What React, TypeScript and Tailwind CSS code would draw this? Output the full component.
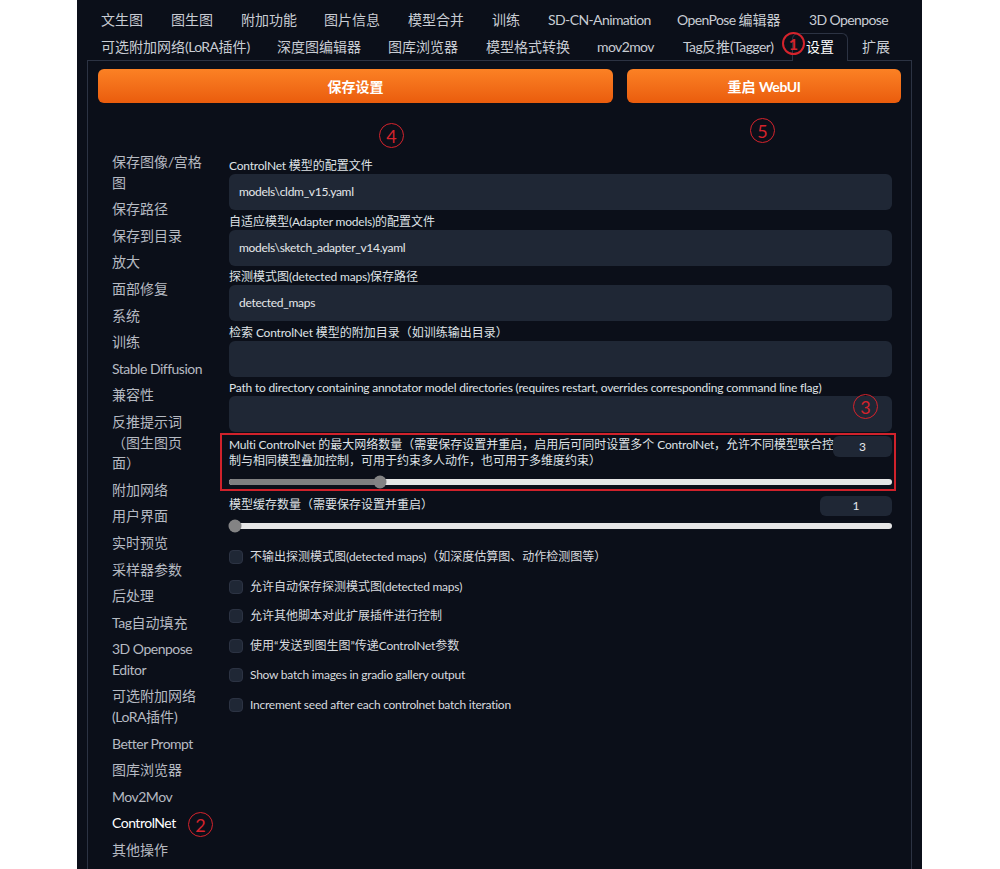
import React from 'react';

// widths taken from the tab strip, so the tabs land where the annotation expects them
const tabRow1 = [
  { t: '文生图', w: 'w-[70px]' },
  { t: '图生图', w: 'w-[70px]' },
  { t: '附加功能', w: 'w-[83px]' },
  { t: '图片信息', w: 'w-[84px]' },
  { t: '模型合并', w: 'w-[84px]' },
  { t: '训练', w: 'w-[56px]' },
  { t: 'SD-CN-Animation', w: 'w-[129px]' },
  { t: 'OpenPose 编辑器', w: 'w-[132px]' },
  { t: '3D Openpose', w: 'w-[104px]' },
];
const tabRow2 = [
  { t: '可选附加网络(LoRA插件)', w: 'w-[176px]' },
  { t: '深度图编辑器', w: 'w-[111px]' },
  { t: '图库浏览器', w: 'w-[98px]' },
  { t: '模型格式转换', w: 'w-[111px]' },
  { t: 'mov2mov', w: 'w-[86px]' },
  { t: 'Tag反推(Tagger)', w: 'w-[123px]' },
  { t: '设置', w: 'w-[56px]' },
  { t: '扩展', w: 'w-[56px]' },
];

const sideItems: string[][] = [
  ['保存图像/宫格', '图'], ['保存路径'], ['保存到目录'], ['放大'], ['面部修复'], ['系统'], ['训练'], ['Stable Diffusion'], ['兼容性'],
  ['反推提示词', '（图生图页', '面）'], ['附加网络'], ['用户界面'], ['实时预览'], ['采样器参数'], ['后处理'], ['Tag自动填充'],
  ['3D Openpose', 'Editor'], ['可选附加网络', '(LoRA插件)'], ['Better Prompt'], ['图库浏览器'], ['Mov2Mov'], ['ControlNet'], ['其他操作'],
];

const textFields = [
  { label: 'ControlNet 模型的配置文件', value: 'models\\cldm_v15.yaml' },
  { label: '自适应模型(Adapter models)的配置文件', value: 'models\\sketch_adapter_v14.yaml' },
  { label: '探测模式图(detected maps)保存路径', value: 'detected_maps' },
  { label: '检索 ControlNet 模型的附加目录（如训练输出目录）', value: '' },
  { label: 'Path to directory containing annotator model directories (requires restart, overrides corresponding command line flag)', value: '' },
];

const checks = [
  '不输出探测模式图(detected maps)（如深度估算图、动作检测图等）',
  '允许自动保存探测模式图(detected maps)',
  '允许其他脚本对此扩展插件进行控制',
  '使用“发送到图生图”传递ControlNet参数',
  'Show batch images in gradio gallery output',
  'Increment seed after each controlnet batch iteration',
];

const marks = [
  { n: '1', cls: 'left-[782px] top-[32px] w-[23px] h-[23px] border-2 text-[16px] font-bold' },
  { n: '4', cls: 'left-[379px] top-[123px] w-[25px] h-[25px] border-[1.5px] text-[18px]' },
  { n: '5', cls: 'left-[750px] top-[118px] w-[25px] h-[25px] border-[1.5px] text-[18px]' },
  { n: '3', cls: 'left-[853px] top-[394px] w-[25px] h-[25px] border-[1.5px] text-[18px]' },
  { n: '2', cls: 'left-[188px] top-[812px] w-[25px] h-[25px] border-[1.5px] text-[18px]' },
];

// Latin runs render wider than the original font, tighten them a bit
function Mix({ text, latin }: { text: string; latin: string }) {
  const parts = text.split(/([\x20-\x7E]+)/);
  return (
    <>
      {parts.map((p, i) =>
        /^[\x20-\x7E]+$/.test(p) ? <span key={i} className={latin}>{p}</span> : <React.Fragment key={i}>{p}</React.Fragment>
      )}
    </>
  );
}

function Slider({ pct }: { pct: number }) {
  return (
    <div className="relative h-[14px] flex items-center">
      <div className="h-[6px] w-full rounded-full bg-[#e6e6e6] overflow-hidden flex">
        <div className="h-full bg-[#7f7f80]" style={{ width: `${pct}%` }} />
      </div>
      <div
        className="absolute top-1/2 -translate-y-1/2 -translate-x-1/2 w-[13px] h-[13px] rounded-full bg-[#838384]"
        style={{ left: `calc(${pct}% + ${pct === 0 ? 6 : 0}px)` }}
      />
    </div>
  );
}

export default function App() {
  return (
    <div
      className="relative w-full h-[869px] bg-white overflow-hidden"
      style={{ fontFamily: 'Lato, "Noto Sans CJK SC", sans-serif' }}
    >
      <div className="ml-[77px] w-[845px] h-full bg-[#0b0f19] px-[10px] pt-[6px] flex flex-col">
        {/* Tabs */}
        <div className="flex h-[27px] items-center">
          {tabRow1.map(({ t, w }) => (
            <div key={t} className={`${w} shrink-0 px-[14px] text-[14px] leading-[27px] text-[#c8ccd3] whitespace-nowrap`}>
              <Mix text={t} latin="tracking-[-0.6px]" />
            </div>
          ))}
        </div>
        <div className="flex h-[27px] items-end">
          {tabRow2.map(({ t, w }) =>
            t === '设置' ? (
              <div
                key={t}
                className={`${w} shrink-0 relative z-10 -mb-px h-[28px] px-[13px] text-[14px] leading-[26px] text-white border border-b-0 border-[#2c3343] rounded-t-[6px] bg-[#0b0f19] whitespace-nowrap`}
              >
                {t}
              </div>
            ) : (
              <div key={t} className={`${w} shrink-0 px-[14px] text-[14px] leading-[27px] text-[#c8ccd3] whitespace-nowrap`}>
                <Mix text={t} latin="tracking-[-0.6px]" />
              </div>
            )
          )}
        </div>

        {/* Settings panel */}
        <div className="flex-1 border border-b-0 border-[#2c3343] px-[10px] pt-[8px]">
          <div className="flex gap-[14px]">
            <button className="w-[515px] h-[34px] rounded-[6px] bg-gradient-to-b from-[#fb8124] to-[#ea5c0c] text-white text-[14px] font-bold">
              保存设置
            </button>
            <button className="flex-1 h-[34px] rounded-[6px] bg-gradient-to-b from-[#fb8124] to-[#ea5c0c] text-white text-[14px] font-bold">
              重启 <span className="tracking-[-0.4px]">WebUI</span>
            </button>
          </div>

          <div className="flex mt-[49px]">
            {/* Sidebar */}
            <div className="ml-[14px] w-[93px] shrink-0 flex flex-col gap-[6px] text-[14px] leading-[20.6px]">
              {sideItems.map((lines) => (
                <div key={lines.join('')} className={`whitespace-nowrap ${lines[0] === 'ControlNet' ? 'text-white' : 'text-[#b6bac2]'}`}>
                  {lines.map((l, i) => (
                    <React.Fragment key={l}>
                      {i > 0 && <br />}
                      <Mix text={l} latin="tracking-[-0.5px]" />
                    </React.Fragment>
                  ))}
                </div>
              ))}
            </div>

            {/* Main */}
            <div className="ml-[24px] w-[663px] pt-[6px] text-[12px] text-[#dfe2e6]">
              <div className="flex flex-col gap-[3.5px]">
                {textFields.map((f) => (
                  <div key={f.label} className="flex flex-col">
                    <div className="leading-[16px] whitespace-nowrap">
                      <Mix text={f.label} latin="tracking-[-0.2px]" />
                    </div>
                    <div className="h-[36px] rounded-[6px] bg-[#1f2735] px-[10px] flex items-center text-[12px] text-[#e5e7eb] tracking-[-0.3px]">
                      {f.value}
                    </div>
                  </div>
                ))}
              </div>

              {/* Multi ControlNet */}
              <div className="relative mt-[4px]">
                <div className="absolute -left-[9px] -right-[4px] -top-[3px] -bottom-[2px] border-2 border-[#d0222b] pointer-events-none" />
                <div className="flex gap-[4px] items-start">
                  <div className="flex-1 min-w-0 leading-[16px] pt-px whitespace-nowrap">
                    <Mix text="Multi ControlNet 的最大网络数量（需要保存设置并重启，启用后可同时设置多个 ControlNet，允许不同模型联合控" latin="tracking-[-0.2px]" />
                    <br />
                    制与相同模型叠加控制，可用于约束多人动作，也可用于多维度约束）
                  </div>
                  <div className="w-[59px] h-[21px] shrink-0 rounded-[6px] bg-[#1f2735] flex items-center justify-center text-[12px] text-[#e5e7eb]">3</div>
                </div>
                <div className="mt-[6px]">
                  <Slider pct={22.8} />
                </div>
              </div>

              {/* Model cache */}
              <div className="mt-[7px]">
                <div className="flex items-start justify-between">
                  <div className="leading-[16px] pt-[1px]">模型缓存数量（需要保存设置并重启）</div>
                  <div className="w-[72px] h-[20px] shrink-0 rounded-[6px] bg-[#1f2735] flex items-center justify-center text-[12px] text-[#e5e7eb]">1</div>
                </div>
                <div className="mt-[3px]">
                  <Slider pct={0} />
                </div>
              </div>

              {/* Checkboxes */}
              <div className="mt-[14px] flex flex-col gap-[9.6px]">
                {checks.map((c) => (
                  <div key={c} className="flex items-center gap-[7px] h-[20px]">
                    <div className="w-[14px] h-[14px] shrink-0 rounded-[4px] bg-[#1f2735] border border-[#2c3343]" />
                    <span className="text-[#d7dadf] leading-[20px] whitespace-nowrap">
                      <Mix text={c} latin="tracking-[-0.25px]" />
                    </span>
                  </div>
                ))}
              </div>
            </div>
          </div>
        </div>
      </div>

      {/* Annotation marks */}
      {marks.map((m) => (
        <div
          key={m.n}
          className={`absolute z-20 rounded-full border-[#d4232c] text-[#d4232c] flex items-center justify-center leading-none ${m.cls}`}
        >
          {m.n}
        </div>
      ))}
    </div>
  );
}
